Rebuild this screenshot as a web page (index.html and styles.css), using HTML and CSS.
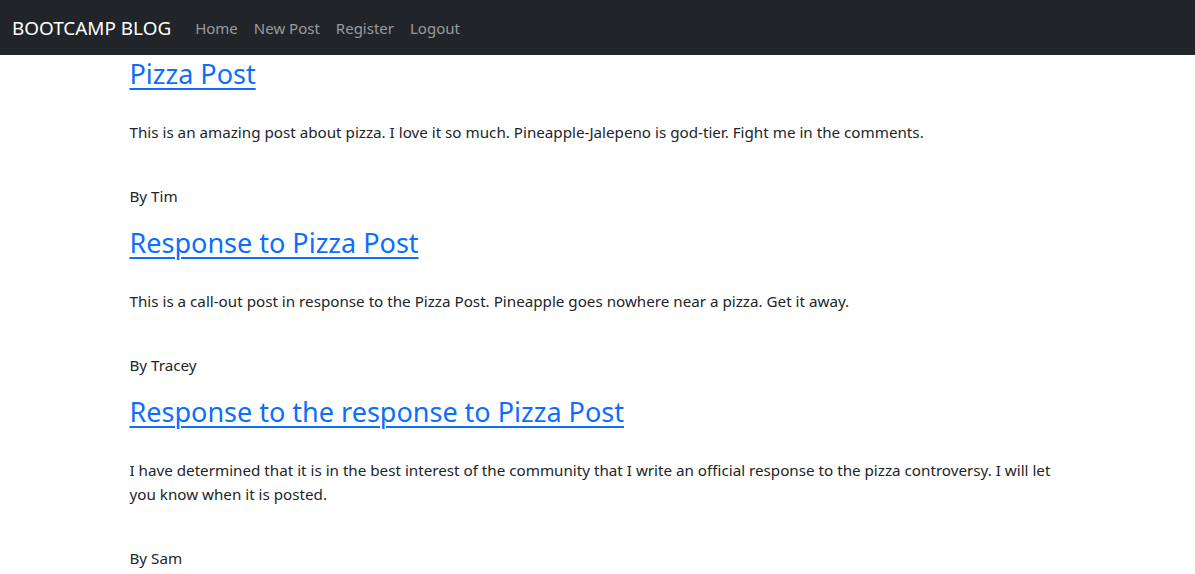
FILE: index.html
```html
<!DOCTYPE html>
<html lang="en">
<head>
<meta charset="utf-8">
<title>Bootcamp Blog</title>
<link rel="stylesheet" href="styles.css">
</head>
<body>
<nav class="navbar">
  <div class="nav-inner">
    <a class="brand" href="#">BOOTCAMP BLOG</a>
    <ul class="nav-links">
      <li><a href="#">Home</a></li>
      <li><a href="#">New Post</a></li>
      <li><a href="#">Register</a></li>
      <li><a href="#">Logout</a></li>
    </ul>
  </div>
</nav>
<main class="container">
  <article class="post">
    <h2 class="post-title"><a href="#">Pizza Post</a></h2>
    <p class="post-body">This is an amazing post about pizza. I love it so much. Pineapple-Jalepeno is god-tier. Fight me in the comments.</p>
    <p class="post-author">By Tim</p>
  </article>
  <article class="post">
    <h2 class="post-title"><a href="#">Response to Pizza Post</a></h2>
    <p class="post-body">This is a call-out post in response to the Pizza Post. Pineapple goes nowhere near a pizza. Get it away.</p>
    <p class="post-author">By Tracey</p>
  </article>
  <article class="post">
    <h2 class="post-title"><a href="#">Response to the response to Pizza Post</a></h2>
    <p class="post-body">I have determined that it is in the best interest of the community that I write an official response to the pizza controversy. I will let you know when it is posted.</p>
    <p class="post-author">By Sam</p>
  </article>
</main>
</body>
</html>
```
FILE: styles.css
```css
* { box-sizing: border-box; }
html, body { margin: 0; padding: 0; }
body {
  font-family: "Noto Sans", "Open Sans", sans-serif;
  font-size: 15.2px;
  line-height: 24px;
  color: #212529;
  background: #fff;
}
.navbar {
  background: #212529;
  height: 55px;
  display: flex;
  align-items: center;
}
.nav-inner {
  display: flex;
  align-items: center;
  padding: 0 12px;
  width: 100%;
}
.brand {
  color: #fff;
  font-size: 18.9px;
  line-height: 30px;
  text-decoration: none;
  margin-right: 16px;
}
.nav-links {
  display: flex;
  list-style: none;
  margin: 0;
  padding: 0;
}
.nav-links a {
  display: block;
  padding: 8px;
  font-size: 15px;
  color: rgba(255, 255, 255, 0.55);
  text-decoration: none;
  line-height: 24px;
}
.container {
  max-width: 960px;
  margin: 0 auto;
  padding: 0 12px;
}
.post-title {
  margin: 0;
  height: 38px;
  font-size: 27px;
  font-weight: 400;
  line-height: 38px;
}
.post-title a {
  color: #0d6efd;
  text-decoration: underline;
  text-decoration-thickness: 2px;
  text-underline-offset: 4px;
}
.post-body {
  margin: 27px 0 40px;
}
.post-author {
  margin: 0 0 16px;
}
```
